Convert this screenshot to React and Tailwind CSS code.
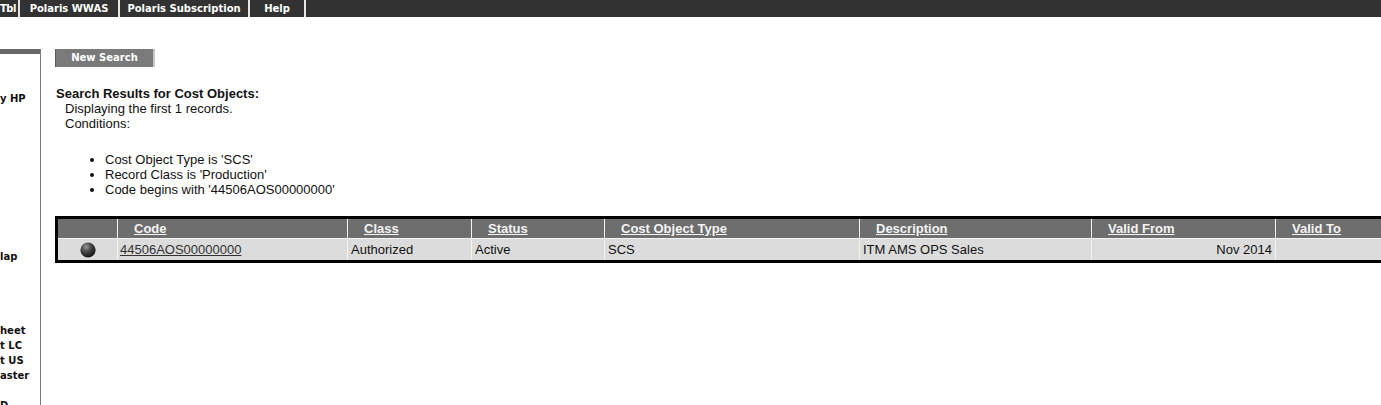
import React from 'react';

const navTabs = [
    { label: 'Tbl', w: 'w-[20px]', align: 'justify-start tracking-[-0.5px]' },
    { label: 'Polaris WWAS', w: 'w-[100px]', align: 'justify-center' },
    { label: 'Polaris Subscription', w: 'w-[130px]', align: 'justify-center' },
    { label: 'Help', w: 'w-[56px]', align: 'justify-center' },
];

const conditions = [
    "Cost Object Type is 'SCS'",
    "Record Class is 'Production'",
    "Code begins with '44506AOS00000000'",
];

const columns = ['Code', 'Class', 'Status', 'Cost Object Type', 'Description', 'Valid From', 'Valid To'];

const Ball = () => (
    <svg width="16" height="16" viewBox="0 0 16 16">
        <defs>
            <radialGradient id="ball" cx="38%" cy="30%" r="70%">
                <stop offset="0%" stopColor="#9a9a9a" />
                <stop offset="45%" stopColor="#4a4a4a" />
                <stop offset="100%" stopColor="#151515" />
            </radialGradient>
        </defs>
        <circle cx="8" cy="8" r="7.6" fill="url(#ball)" />
    </svg>
);

const App = () => {
    return (
        <div className='w-[1381px] h-[405px] overflow-hidden bg-white text-[#111]'>
            {/* top menu */}
            <div className='flex h-[17px] bg-[#323232] font-["DejaVu_Sans",Verdana,sans-serif] text-[10px] font-bold text-white'>
                { navTabs.map((t) => (
                    <div key={ t.label } className={ `${t.w} ${t.align} flex items-center border-r-2 border-[#e6e6e6] whitespace-nowrap overflow-hidden` }>
                        { t.label }
                    </div>
                )) }
            </div>

            <div className='flex mt-[32px] h-[356px]'>
                {/* left nav, mostly scrolled out of view */}
                <div className='w-[41px] shrink-0 border-r border-[#7a7a7a] overflow-hidden font-["DejaVu_Sans",Verdana,sans-serif] text-[10px] font-bold leading-[15px] whitespace-nowrap'>
                    <div className='h-[5px] bg-[#686868]' />
                    <div className='mt-[37px]'>y HP</div>
                    <div className='mt-[143px]'>lap</div>
                    <div className='mt-[59px]'>heet</div>
                    <div>t LC</div>
                    <div>t US</div>
                    <div>aster</div>
                    <div className='mt-[15px]'>D</div>
                </div>

                {/* main */}
                <div className='pl-[14px] font-["Liberation_Sans",Arial,sans-serif] text-[13px] leading-[15px]'>
                    <button type='button' className='w-[100px] h-[18px] bg-[#7a7a7a] border-l border-[#5c5c5c] border-r-2 border-r-[#c8c8c8] font-["DejaVu_Sans",Verdana,sans-serif] text-[10px] font-bold text-white leading-[18px]'>
                        New Search
                    </button>

                    <h1 className='mt-[19px] font-bold pl-px'>Search Results for Cost Objects:</h1>
                    <div className='pl-[10px]'>
                        <p>Displaying the first 1 records.</p>
                        <p>Conditions:</p>
                    </div>
                    <ul className='list-disc mt-[21px] pl-[50px]'>
                        { conditions.map((c) => (
                            <li key={ c }>{ c }</li>
                        )) }
                    </ul>

                    <div className='mt-[19px] w-max border-[3px] border-black bg-[#f4f4f4]'>
                        <div className='grid grid-cols-[59px_229px_123px_132px_254px_231px_183px_200px] gap-px'>
                            <div className='h-[19px] bg-[#6e6e6e]' />
                            { columns.map((c) => (
                                <div key={ c } className='h-[19px] bg-[#6e6e6e] pl-[16px] flex items-center font-bold text-[#f4f4f4] underline'>
                                    { c }
                                </div>
                            )) }

                            <div className='h-[21px] bg-[#dcdcdc] flex items-center justify-center pl-px'>
                                <Ball />
                            </div>
                            <div className='h-[21px] bg-[#dcdcdc] pl-[2px] flex items-center'>
                                <a href='#' className='underline text-[#333]'>44506AOS00000000</a>
                            </div>
                            <div className='h-[21px] bg-[#dcdcdc] pl-[3px] flex items-center'>Authorized</div>
                            <div className='h-[21px] bg-[#dcdcdc] pl-[3px] flex items-center'>Active</div>
                            <div className='h-[21px] bg-[#dcdcdc] pl-[3px] flex items-center'>SCS</div>
                            <div className='h-[21px] bg-[#dcdcdc] pl-[3px] flex items-center'>ITM AMS OPS Sales</div>
                            <div className='h-[21px] bg-[#dcdcdc] pr-[3px] flex items-center justify-end'>Nov 2014</div>
                            <div className='h-[21px] bg-[#dcdcdc]' />
                        </div>
                    </div>
                </div>
            </div>
        </div>
    );
};

export default App;
